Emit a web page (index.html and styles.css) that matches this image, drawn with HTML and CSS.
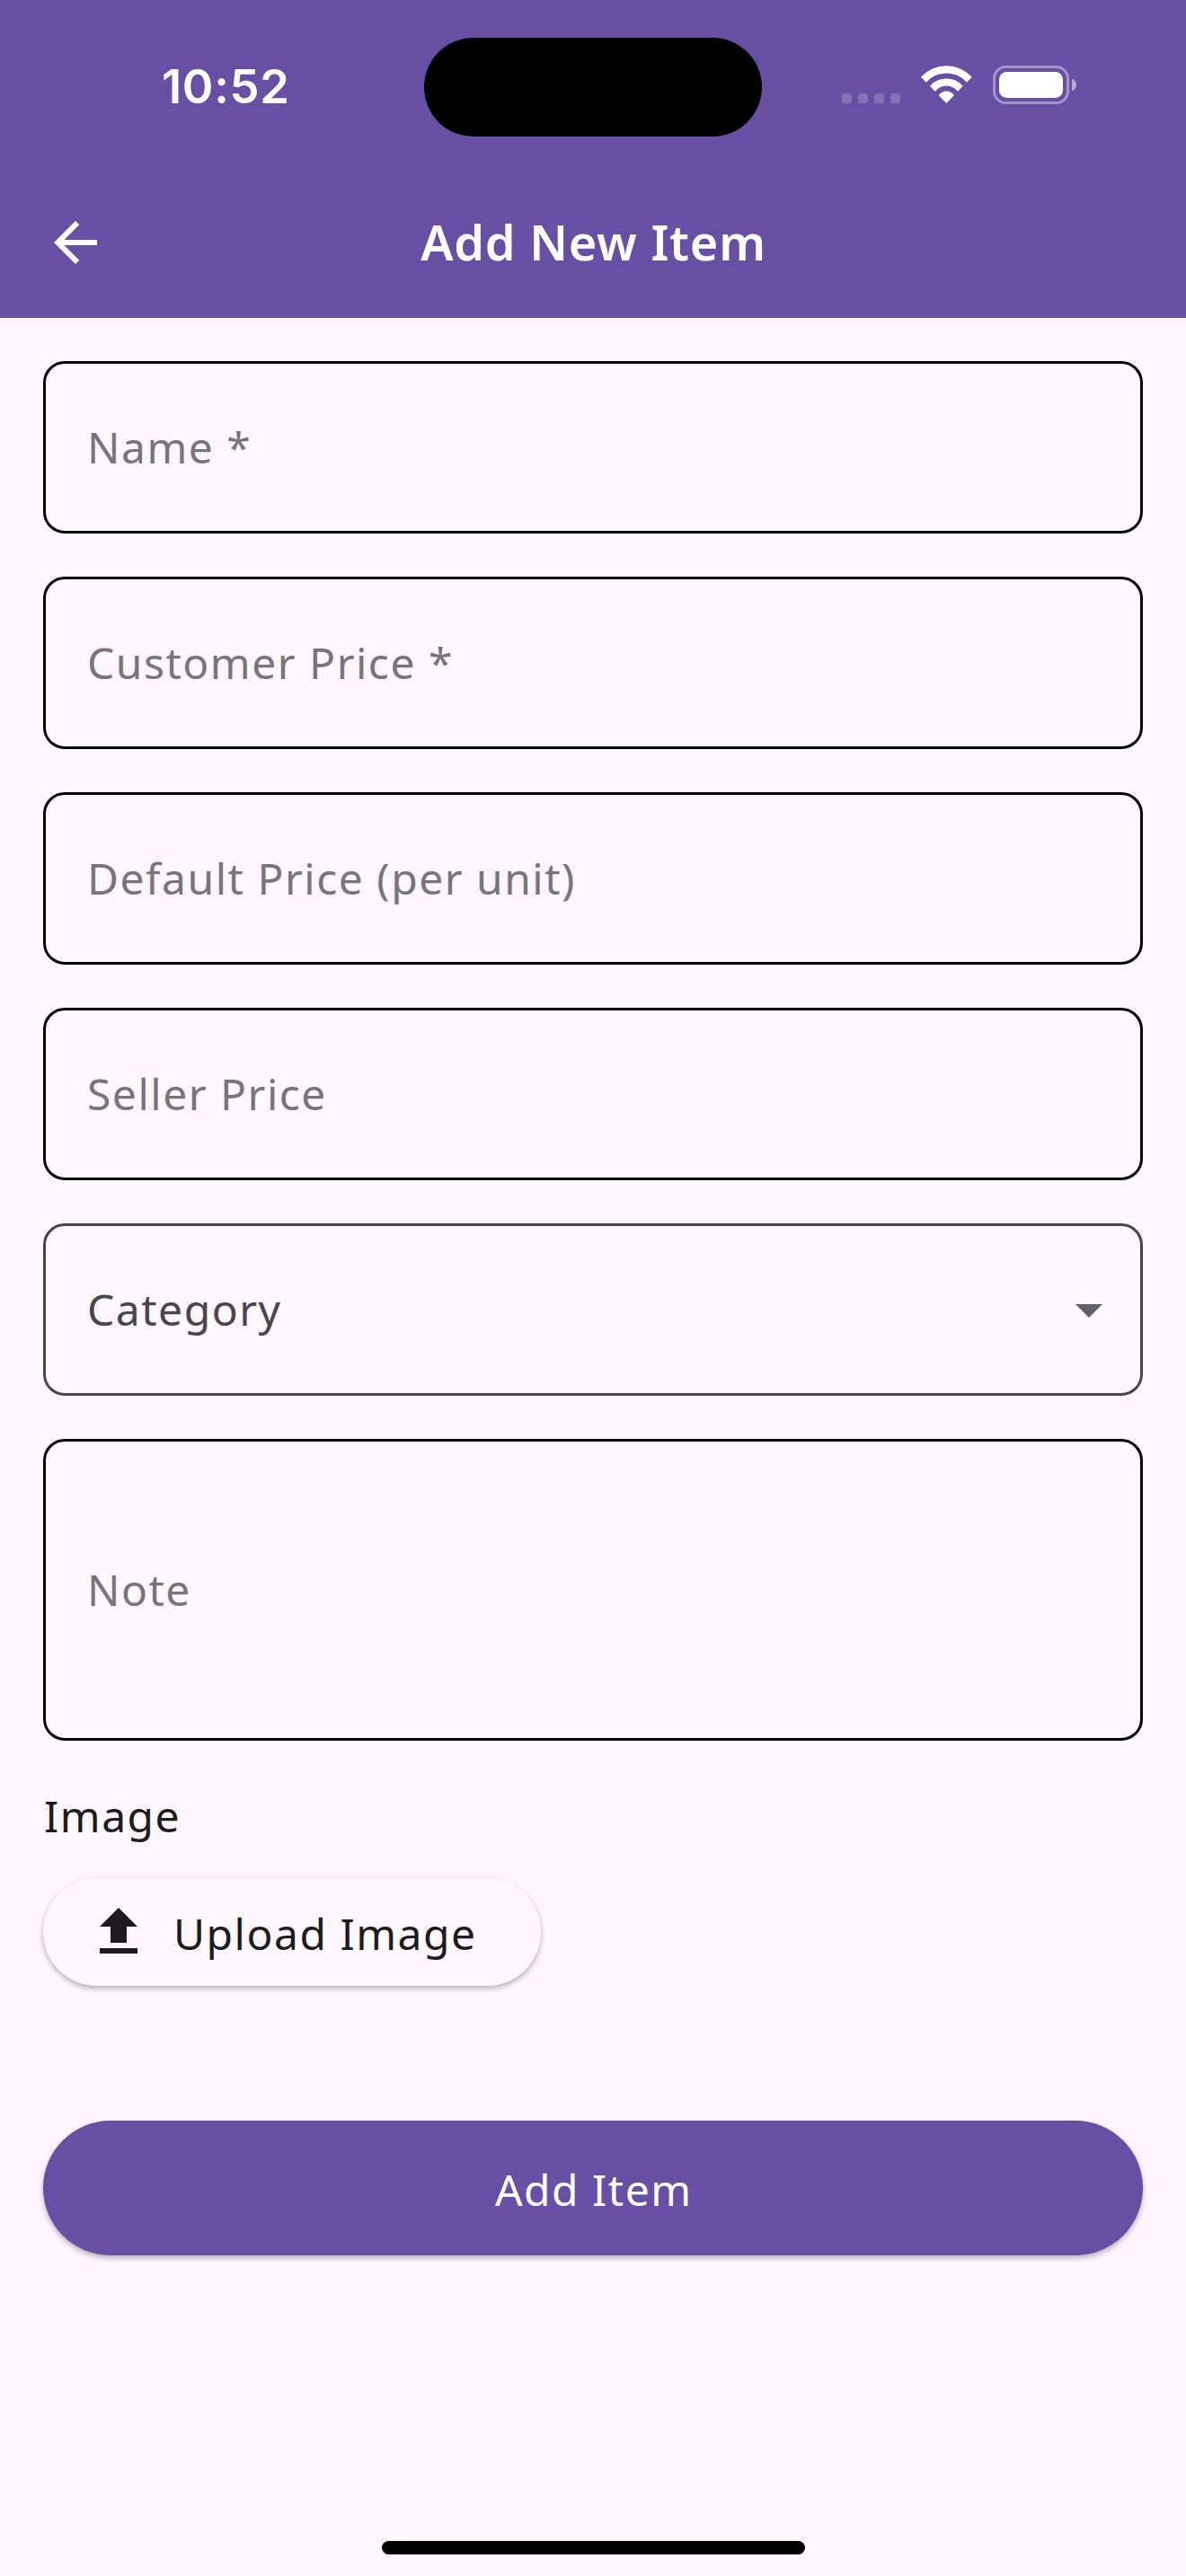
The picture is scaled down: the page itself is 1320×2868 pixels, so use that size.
FILE: index.html
```html
<!DOCTYPE html>
<html lang="en">
<head>
<meta charset="utf-8">
<title>Add New Item</title>
<link rel="stylesheet" href="styles.css">
</head>
<body>
<div class="screen">
  <header class="top">
    <div class="status">
      <span class="clock">10:52</span>
      <span class="island"></span>
      <svg class="signals" width="264" height="48" viewBox="0 0 264 48">
        <g fill="#fff" fill-opacity=".2"><rect x="1" y="31" width="11" height="11" rx="3.500"/><rect x="19" y="31" width="11" height="11" rx="3.500"/><rect x="37" y="31" width="11" height="11" rx="3.500"/><rect x="55" y="31" width="11" height="11" rx="3.500"/></g>
        <g fill="#fff">
          <path d="M89 12.700A38.500 38.500 0 0 1 145.700 12.700L140 18.700A30.100 30.100 0 0 0 94.700 18.700Z"/>
          <path d="M99 22.700A24.500 24.500 0 0 1 135.700 22.700L130 28.800A15.800 15.800 0 0 0 104.700 28.800Z"/>
          <path d="M108.700 33.200A10.200 10.200 0 0 1 126 33.200L117.350 42Z"/>
        </g>
        <rect x="170.500" y="1.500" width="82" height="40" rx="13" fill="none" stroke="#fff" stroke-opacity=".4" stroke-width="3"/>
        <rect x="176" y="7" width="71" height="29" rx="8.500" fill="#fff"/>
        <path d="M257 14.500q5 2 5 7t-5 7z" fill="#fff" fill-opacity=".5"/>
      </svg>
    </div>
    <div class="appbar">
      <svg class="back" width="48" height="48" viewBox="4 4 16 16"><path d="M20 11H7.830l5.590-5.590L12 4l-8 8 8 8 1.410-1.410L7.830 13H20z" fill="#fff"/></svg>
      <h1 class="title">Add New Item</h1>
    </div>
  </header>
  <main class="form">
    <div class="field"><span>Name *</span></div>
    <div class="field"><span>Customer Price *</span></div>
    <div class="field"><span>Default Price (per unit)</span></div>
    <div class="field"><span>Seller Price</span></div>
    <div class="field select"><span>Category</span><svg class="caret" width="30" height="15" viewBox="0 0 10 5"><path d="M0 0h10L5 5z" fill="#616161"/></svg></div>
    <div class="field note"><span>Note</span></div>
    <div class="label">Image</div>
    <button class="upload"><svg class="upload-icon" width="42" height="51" viewBox="5 3 14 17"><path d="M9 16h6v-6h4l-7-7-7 7h4zM5 18h14v2H5z" fill="#1d1b20"/></svg><span class="upload-text">Upload Image</span></button>
    <button class="submit">Add Item</button>
  </main>
  <div class="home"></div>
</div>
</body>
</html>
```
FILE: styles.css
```css
* { box-sizing: border-box; }
body { margin: 0; }
.screen { width: 1320px; height: 2868px; display: flex; flex-direction: column; background: #fef7ff; font-family: "Noto Sans", sans-serif; font-size: 48px; letter-spacing: 1.5px; color: #1d1b20; }
.top { height: 354px; background: #6750a4; color: #fff; }
.status { height: 186px; display: grid; grid-template-columns: 472px 376px 1fr; }
.clock { padding: 60px 0 0 180px; font: 600 52.5px/72px Inter, sans-serif; letter-spacing: 0.65px; }
.island { margin-top: 42px; height: 110px; border-radius: 55px; background: #000; }
.signals { margin: 73px 0 0 88px; }
.appbar { height: 168px; display: grid; grid-template-columns: 108px 1fr 108px; align-items: center; }
.back { margin-left: 60px; }
.title { margin: 0; padding: 0 0 2px 1px; text-align: center; font-size: 54px; font-weight: 600; line-height: 72px; letter-spacing: 0.75px; }
.form { display: flex; flex-direction: column; padding: 48px 48px 0; }
.field { height: 192px; margin-bottom: 48px; padding: 0 42px 0 46px; border: 3px solid #000; border-radius: 24px; display: flex; align-items: center; justify-content: space-between; color: #79747b; line-height: 72px; }
.select { border-color: #49454f; color: #49454f; }
.caret { margin-top: 3px; }
.note { height: 336px; }
.label { padding-left: 1px; line-height: 72px; }
.upload, .submit { border: 0; font: inherit; letter-spacing: inherit; }
.upload { align-self: flex-start; display: flex; align-items: center; gap: 40px; width: 554px; height: 120px; margin-top: 33px; padding: 0 63px; border-radius: 60px; background: #fef7ff; color: #1d1b20; box-shadow: 0 3px 6px rgba(0,0,0,.3); white-space: nowrap; }
.upload-icon { flex: none; margin-bottom: 3px; }
.upload-text { padding-top: 2px; }
.submit { height: 150px; margin-top: 150px; padding: 2px 0 0 1.5px; border-radius: 75px; background: #6750a4; color: #fff; box-shadow: 0 3px 6px rgba(0,0,0,.3); }
.home { width: 471px; height: 15px; margin: auto 0 24px 425px; border-radius: 8px; background: #000; }
```
